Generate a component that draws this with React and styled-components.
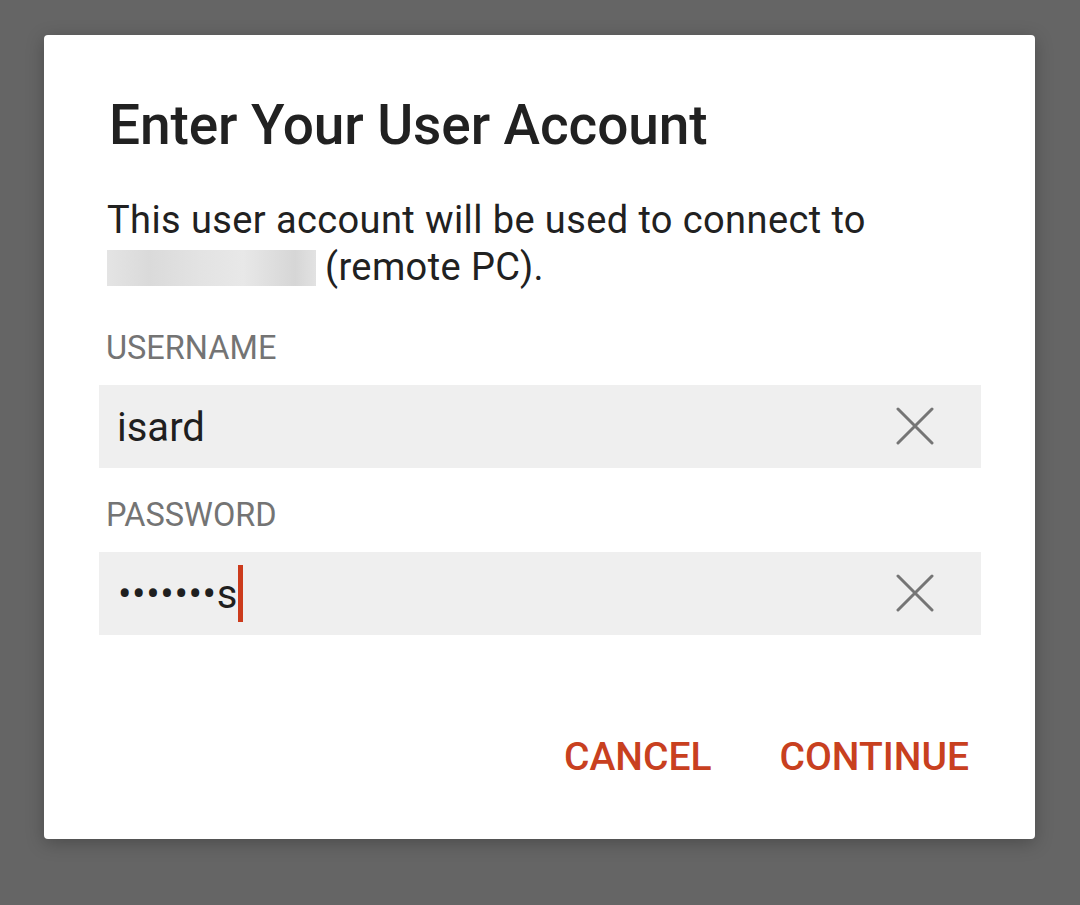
import React from "react";
import styled, { createGlobalStyle } from "styled-components";

const Global = createGlobalStyle`
  html, body { margin: 0; padding: 0; }
  body {
    background: #656565;
    font-family: Roboto, "Noto Sans", sans-serif;
    width: 1080px;
    height: 905px;
    overflow: hidden;
  }
`;

const Screen = styled.div`
  width: 1080px;
  height: 905px;
  padding: 35px 0 0 44px;
  box-sizing: border-box;
  background: #656565;
`;

const Dialog = styled.div`
  width: 991px;
  height: 804px;
  box-sizing: border-box;
  background: #ffffff;
  border-radius: 4px;
  box-shadow: 0 4px 18px rgba(0, 0, 0, 0.25);
  padding: 55px 54px 0 55px;
  display: flex;
  flex-direction: column;
`;

const Title = styled.h1`
  margin: 0 0 0 10px;
  font-family: Roboto, sans-serif;
  font-weight: 500;
  font-size: 55px;
  line-height: 70px;
  letter-spacing: -0.1px;
  color: #212121;
`;

const Message = styled.p`
  margin: 37px 0 0 8px;
  font-size: 38px;
  line-height: 47px;
  letter-spacing: 0.4px;
  color: #212121;
  font-weight: 400;
`;

const Redacted = styled.span`
  display: inline-block;
  width: 209px;
  height: 36px;
  vertical-align: -6px;
  margin-right: 9px;
  background: linear-gradient(90deg, #e4e4e4 0%, #dadada 20%, #e3e3e3 45%, #e8e8e8 65%, #d6d6d6 90%, #e2e2e2 100%);
  filter: blur(0.6px);
`;

const Label = styled.div`
  margin: ${(p) => p.$top}px 0 0 7px;
  font-size: 32.5px;
  line-height: 36px;
  color: #747474;
  font-weight: 400;
`;

const Field = styled.div`
  margin-top: 19px;
  height: 83px;
  background: #efefef;
  display: flex;
  align-items: center;
  padding: 3px 46px 0 18px;
  box-sizing: border-box;
`;

const Value = styled.div`
  flex: 1;
  font-size: 40px;
  line-height: 46px;
  color: #1f1f1f;
  display: flex;
  align-items: center;
`;

const Dots = styled.span`
  font-size: 40px;
  letter-spacing: 0.6px;
  margin-left: 1px;
`;

const Cursor = styled.span`
  display: inline-block;
  width: 5px;
  height: 57px;
  background: #cc3b1c;
  margin-left: 0px;
  margin-top: -3px;
`;

const ClearButton = styled.button`
  border: 0;
  background: transparent;
  padding: 0;
  width: 40px;
  height: 40px;
  display: flex;
  align-items: center;
  justify-content: center;
  margin-top: -4px;
`;

const Actions = styled.div`
  margin-top: 100px;
  display: flex;
  justify-content: flex-end;
  gap: 68px;
  padding-right: 12px;
`;

const ActionButton = styled.button`
  border: 0;
  background: transparent;
  padding: 0;
  font-family: Roboto, sans-serif;
  font-weight: 500;
  font-size: 39px;
  line-height: 44px;
  color: #c8401f;
  text-transform: uppercase;
`;

const XIcon = () => (
  <svg width="38" height="38" viewBox="0 0 38 38">
    <path d="M2 2 L36 36 M36 2 L2 36" stroke="#757575" strokeWidth="3" strokeLinecap="round" fill="none" />
  </svg>
);

export default function App() {
  return (
    <>
      <Global />
      <Screen>
        <Dialog>
          <Title>Enter Your User Account</Title>
          <Message>
            This user account will be used to connect to
            <br />
            <Redacted />(remote PC).
          </Message>
          <Label $top={39}>USERNAME</Label>
          <Field>
            <Value>isard</Value>
            <ClearButton aria-label="Clear username">
              <XIcon />
            </ClearButton>
          </Field>
          <Label $top={29}>PASSWORD</Label>
          <Field>
            <Value>
              <Dots>•••••••s</Dots>
              <Cursor />
            </Value>
            <ClearButton aria-label="Clear password">
              <XIcon />
            </ClearButton>
          </Field>
          <Actions>
            <ActionButton>Cancel</ActionButton>
            <ActionButton>Continue</ActionButton>
          </Actions>
        </Dialog>
      </Screen>
    </>
  );
}
